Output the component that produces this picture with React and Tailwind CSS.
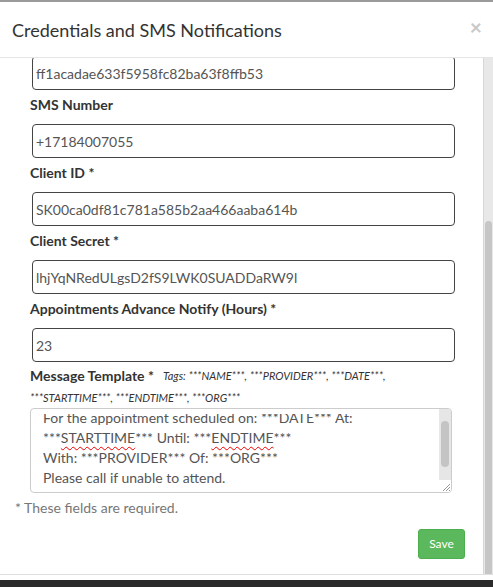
import React from "react";

const Label = ({ children }) => (
  <div className="text-[14px] leading-[18px] font-bold text-[#333] pl-[30px] mb-[10px]">{children}</div>
);

const Field = ({ value }) => (
  <div className="ml-[32px] w-[423px] h-[34px] border border-[#444] rounded-[4px] flex items-center px-[3px] text-[14px] text-[#555]">
    {value}
  </div>
);

const Wavy = ({ children }) => (
  <span className="underline decoration-wavy decoration-[#e00] decoration-1 underline-offset-[3px]">{children}</span>
);

export default function App() {
  return (
    <div className="w-[493px] h-[587px] flex flex-col bg-white overflow-hidden font-['Lato','Liberation_Sans',sans-serif]">
      <div className="h-[2px] bg-[#9a9a9a] shrink-0" />
      <div className="h-[56px] shrink-0 flex items-center justify-between pl-[12px] pr-[11px] border-b border-[#e5e5e5]">
        <h4 className="text-[18px] text-[#333] leading-none">Credentials and SMS Notifications</h4>
        <span className="text-[21px] font-bold text-[#c8c8c8] leading-none -mt-[6px]">×</span>
      </div>
      <div className="flex-1 flex overflow-hidden">
        <div className="flex-1 overflow-hidden">
          <div className="-mt-[2px]">
            <Field value="ff1acadae633f5958fc82ba63f8ffb53" />
            <div className="h-[6px]" />
            <Label>SMS Number</Label>
            <Field value="+17184007055" />
            <div className="h-[6px]" />
            <Label>Client ID *</Label>
            <Field value="SK00ca0df81c781a585b2aa466aaba614b" />
            <div className="h-[6px]" />
            <Label>Client Secret *</Label>
            <Field value="lhjYqNRedULgsD2fS9LWK0SUADDaRW9l" />
            <div className="h-[6px]" />
            <Label>Appointments Advance Notify (Hours) *</Label>
            <Field value="23" />
            <div className="pl-[30px] mt-[4px] text-[#333]">
              <div className="h-[20px] flex items-center">
                <span className="text-[14px] font-bold leading-[20px]">Message Template *</span>
                <span className="text-[11px] italic ml-[9px] leading-[20px]">Tags: ***NAME***, ***PROVIDER***, ***DATE***,</span>
              </div>
              <div className="h-[20px] mt-[2px] flex items-center">
                <span className="text-[11px] italic leading-[20px]">***STARTTIME***, ***ENDTIME***, ***ORG***</span>
              </div>
            </div>
            <div className="ml-[30px] w-[422px] h-[85px] border border-[#ccc] rounded-[4px] flex overflow-hidden">
              <div className="flex-1 pt-[5px] flex flex-col">
                <div className="flex-1 overflow-hidden pl-[12px] text-[14px] leading-[20px] text-[#555]">
                  <div className="-mt-[6px]">
                    <div>For the appointment scheduled on: ***DATE*** At:</div>
                    <div>***<Wavy>STARTTIME</Wavy>*** Until: ***<Wavy>ENDTIME</Wavy>***</div>
                    <div>With: ***PROVIDER*** Of: ***ORG***</div>
                    <div>Please call if unable to attend.</div>
                  </div>
                </div>
              </div>
              <div className="w-[12px] bg-[#e6e6e6] flex flex-col">
                <div className="h-[12px]" />
                <div className="mx-[2px] h-[46px] rounded-full bg-[#c4c4c4]" />
                <div className="flex-1" />
                <div className="h-[12px] bg-white flex items-end justify-end">
                  <svg width="10" height="10" viewBox="0 0 10 10">
                    <path d="M9 2L2 9M9 5L5 9M9 8L8 9" stroke="#999" strokeWidth="1" />
                  </svg>
                </div>
              </div>
            </div>
            <div className="pl-[15px] mt-[5px] text-[14px] text-[#777] leading-[20px]">* These fields are required.</div>
            <div className="flex justify-end pr-[18px] mt-[11px]">
              <button className="w-[47px] h-[30px] rounded-[3px] bg-[#5cb85c] border border-[#4cae4c] text-white text-[12px]">Save</button>
            </div>
          </div>
        </div>
        <div className="w-[10px] bg-[#e8e8e8] border-l border-[#d6d6d6] flex flex-col">
          <div className="h-[163px]" />
          <div className="flex-1 mx-[1px] rounded-t-[4px] bg-[#c6c6c6]" />
        </div>
      </div>
      <div className="h-[1px] bg-[#e0e0e0] shrink-0" />
      <div className="h-[5px] bg-white shrink-0" />
      <div className="h-[7px] bg-[#2b2b2b] shrink-0" />
    </div>
  );
}
